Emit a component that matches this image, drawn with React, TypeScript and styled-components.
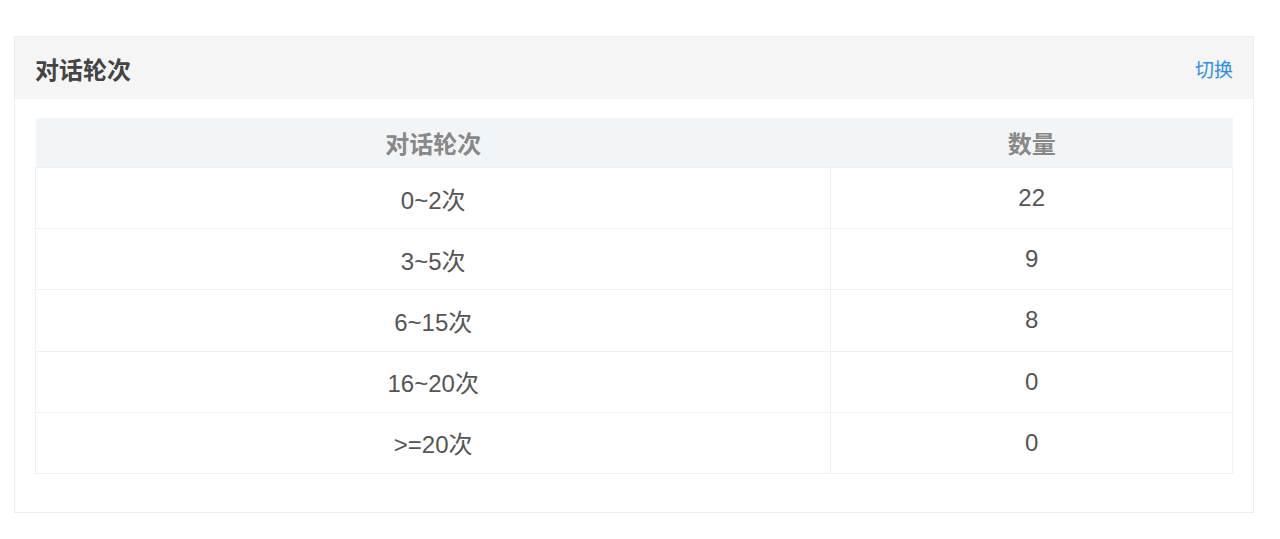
import React from 'react';
import styled, { createGlobalStyle } from 'styled-components';

const GlobalStyle = createGlobalStyle`
  body {
    margin: 0;
    background: #fff;
    font-family: "Liberation Sans", "Noto Sans CJK SC", sans-serif;
  }
`;

const Page = styled.div`
  padding: 36px 26px 26px 14px;
`;

const Card = styled.section`
  border: 1px solid #ebeef2;
  background: #fff;
`;

const CardHeader = styled.header`
  display: flex;
  align-items: center;
  justify-content: space-between;
  height: 62px;
  padding: 0 20px;
  background: #f5f5f5;
`;

const CardTitle = styled.h2`
  margin: 0;
  font-size: 24px;
  font-weight: 600;
  color: #444;
`;

const SwitchLink = styled.a`
  font-size: 19px;
  color: #2d8cf0;
  cursor: pointer;
`;

const CardBody = styled.div`
  padding: 19px 20px 38px;
`;

const Table = styled.table`
  width: 100%;
  border-collapse: collapse;
  table-layout: fixed;
`;

const HeadCell = styled.th<{ $w?: string }>`
  width: ${(p) => p.$w || 'auto'};
  height: 49px;
  padding: 0;
  background: #f2f5f8;
  color: #888;
  font-size: 24px;
  font-weight: 600;
  text-align: center;
`;

const Cell = styled.td`
  height: 60.2px;
  padding: 0;
  border: 1px solid #eef0f3;
  color: #555;
  font-size: 24px;
  text-align: center;
`;

const rows = [
  { label: '0~2次', count: 22 },
  { label: '3~5次', count: 9 },
  { label: '6~15次', count: 8 },
  { label: '16~20次', count: 0 },
  { label: '>=20次', count: 0 },
];

export default function App() {
  return (
    <Page>
      <GlobalStyle />
      <Card>
        <CardHeader>
          <CardTitle>对话轮次</CardTitle>
          <SwitchLink>切换</SwitchLink>
        </CardHeader>
        <CardBody>
          <Table>
            <thead>
              <tr>
                <HeadCell $w="66.45%">对话轮次</HeadCell>
                <HeadCell>数量</HeadCell>
              </tr>
            </thead>
            <tbody>
              {rows.map((r) => (
                <tr key={r.label}>
                  <Cell>{r.label}</Cell>
                  <Cell>{r.count}</Cell>
                </tr>
              ))}
            </tbody>
          </Table>
        </CardBody>
      </Card>
    </Page>
  );
}
